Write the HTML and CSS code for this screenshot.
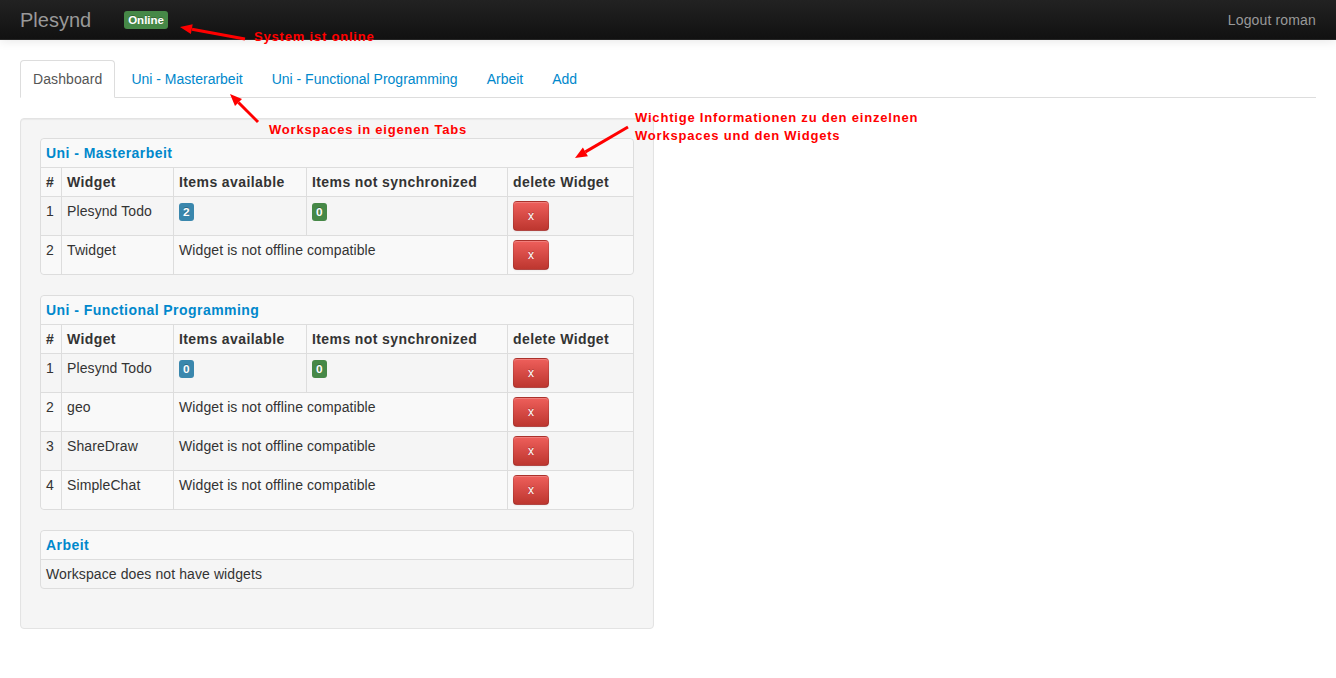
FILE: index.html
```html
<!DOCTYPE html>
<html lang="de">
<head>
<meta charset="utf-8">
<title>Plesynd</title>
<link rel="stylesheet" href="styles.css">
</head>
<body>
<header class="navbar">
  <a class="brand" href="#">Plesynd</a>
  <span class="label label-success">Online</span>
  <a class="logout" href="#">Logout roman</a>
</header>

<main class="container">
  <ul class="nav-tabs">
    <li class="active"><a href="#">Dashboard</a></li>
    <li><a href="#">Uni - Masterarbeit</a></li>
    <li><a href="#">Uni - Functional Programming</a></li>
    <li><a href="#">Arbeit</a></li>
    <li><a href="#">Add</a></li>
  </ul>

  <section class="well">
    <table class="ws-table">
      <colgroup><col class="c1"><col class="c2"><col class="c3"><col class="c4"><col class="c5"></colgroup>
      <thead>
        <tr class="cap"><th colspan="5">Uni - Masterarbeit</th></tr>
        <tr class="head"><th>#</th><th>Widget</th><th>Items available</th><th>Items not synchronized</th><th>delete Widget</th></tr>
      </thead>
      <tbody>
        <tr class="odd"><td>1</td><td>Plesynd Todo</td><td><span class="label label-info">2</span></td><td><span class="label label-success">0</span></td><td><button class="btn-danger">x</button></td></tr>
        <tr class="even"><td>2</td><td>Twidget</td><td colspan="2">Widget is not offline compatible</td><td><button class="btn-danger">x</button></td></tr>
      </tbody>
    </table>

    <table class="ws-table">
      <colgroup><col class="c1"><col class="c2"><col class="c3"><col class="c4"><col class="c5"></colgroup>
      <thead>
        <tr class="cap"><th colspan="5">Uni - Functional Programming</th></tr>
        <tr class="head"><th>#</th><th>Widget</th><th>Items available</th><th>Items not synchronized</th><th>delete Widget</th></tr>
      </thead>
      <tbody>
        <tr class="odd"><td>1</td><td>Plesynd Todo</td><td><span class="label label-info">0</span></td><td><span class="label label-success">0</span></td><td><button class="btn-danger">x</button></td></tr>
        <tr class="even"><td>2</td><td>geo</td><td colspan="2">Widget is not offline compatible</td><td><button class="btn-danger">x</button></td></tr>
        <tr class="odd"><td>3</td><td>ShareDraw</td><td colspan="2">Widget is not offline compatible</td><td><button class="btn-danger">x</button></td></tr>
        <tr class="even"><td>4</td><td>SimpleChat</td><td colspan="2">Widget is not offline compatible</td><td><button class="btn-danger">x</button></td></tr>
      </tbody>
    </table>

    <table class="ws-table">
      <thead>
        <tr class="cap"><th>Arbeit</th></tr>
      </thead>
      <tbody>
        <tr class="odd"><td>Workspace does not have widgets</td></tr>
      </tbody>
    </table>
  </section>
</main>

<div class="note note-online">System ist online</div>
<div class="note note-tabs">Workspaces in eigenen Tabs</div>
<div class="note note-info">Wichtige Informationen zu den einzelnen<br>Workspaces und den Widgets</div>

<svg class="arrows" width="1336" height="678" viewBox="0 0 1336 678" aria-hidden="true">
  <g stroke="#f00" stroke-width="3" fill="#f00">
    <line x1="245" y1="39" x2="192" y2="29.2"/>
    <polygon stroke="none" points="180,27 192.7,24.3 190.9,34.1"/>
    <line x1="258" y1="122" x2="238.5" y2="102.5"/>
    <polygon stroke="none" points="230,94 242,99 235,106"/>
    <line x1="628" y1="127" x2="585.4" y2="151.9"/>
    <polygon stroke="none" points="575,158 587.9,156.2 582.9,147.6"/>
  </g>
</svg>
</body>
</html>
```

FILE: styles.css
```css
* { box-sizing: border-box; }

html, body {
  margin: 0;
  padding: 0;
  background: #fff;
}

body {
  font-family: "Liberation Sans", Arial, Helvetica, sans-serif;
  font-size: 14px;
  line-height: 20px;
  color: #333;
  position: relative;
  width: 1336px;
  height: 678px;
  overflow: hidden;
}

a { text-decoration: none; }

/* Navbar */
.navbar {
  height: 40px;
  display: flex;
  align-items: center;
  padding: 0 20px;
  background: linear-gradient(to bottom, #222 0%, #111 100%);
  box-shadow: 0 1px 10px rgba(0, 0, 0, 0.1);
  border-bottom: 1px solid #252525;
}

.brand {
  font-size: 20px;
  line-height: 20px;
  color: #999;
  margin-right: 33px;
}

.logout {
  margin-left: auto;
  color: #999;
  letter-spacing: 0.15px;
}

.label {
  display: inline-block;
  padding: 2px 4px;
  font-size: 11.844px;
  font-weight: bold;
  line-height: 14px;
  color: #fff;
  border-radius: 3px;
  vertical-align: baseline;
  text-shadow: 0 -1px 0 rgba(0, 0, 0, 0.25);
  white-space: nowrap;
}

.label-success { background: #468847; }
.label-info { background: #3a87ad; }

.navbar .label {
  margin-top: 1px;
  font-size: 11.5px;
}

/* Content */
.container {
  padding: 20px 20px 0;
}

.nav-tabs {
  list-style: none;
  margin: 0 0 20px;
  padding: 0;
  display: flex;
  border-bottom: 1px solid #ddd;
}

.nav-tabs li {
  margin-bottom: -1px;
}

.nav-tabs a {
  display: block;
  padding: 8px 12px 8px 13px;
  margin-right: 2px;
  line-height: 20px;
  border: 1px solid transparent;
  border-radius: 4px 4px 0 0;
  color: #0088cc;
}

.nav-tabs .active a {
  color: #555;
  background: #fff;
  border-color: #ddd #ddd transparent;
  padding-left: 12px;
  letter-spacing: 0.1px;
}

.well {
  width: 634px;
  padding: 19px;
  background: #f5f5f5;
  border: 1px solid #e3e3e3;
  border-radius: 4px;
  box-shadow: inset 0 1px 1px rgba(0, 0, 0, 0.05);
}

.ws-table {
  width: 594px;
  table-layout: fixed;
  border-collapse: separate;
  border-spacing: 0;
  border: 1px solid #ddd;
  border-radius: 4px;
  margin-bottom: 20px;
}

.ws-table .c1 { width: 20px; }
.ws-table .c2 { width: 112px; }
.ws-table .c3 { width: 133px; }
.ws-table .c4 { width: 201px; }
.ws-table .c5 { width: 126px; }

.ws-table th,
.ws-table td {
  padding: 4px 5px;
  line-height: 20px;
  text-align: left;
  vertical-align: top;
  border-top: 1px solid #ddd;
  border-left: 1px solid #ddd;
  white-space: nowrap;
}

.ws-table td { letter-spacing: 0.1px; }

.ws-table th:first-child,
.ws-table td:first-child { border-left: 0; }

.ws-table tr.cap th {
  border-top: 0;
  color: #0088cc;
  font-weight: bold;
  letter-spacing: 0.45px;
  background: #f9f9f9;
  border-radius: 4px 4px 0 0;
}

.ws-table tr.head th {
  font-weight: bold;
  letter-spacing: 0.4px;
  background: #f9f9f9;
}

.ws-table tr.even td { background: #f9f9f9; }

.ws-table tbody tr:last-child td:first-child { border-bottom-left-radius: 4px; }
.ws-table tbody tr:last-child td:last-child { border-bottom-right-radius: 4px; }

.ws-table .label { letter-spacing: 0; }

.btn-danger {
  display: block;
  width: 36px;
  height: 30px;
  padding: 0;
  font-family: inherit;
  font-size: 12px;
  line-height: 28px;
  color: #fff;
  text-align: center;
  background: linear-gradient(to bottom, #ee5f5b 0%, #bd362f 100%);
  border: 1px solid #b33630;
  border-color: rgba(0, 0, 0, 0.1) rgba(0, 0, 0, 0.1) rgba(0, 0, 0, 0.25);
  border-radius: 4px;
  box-shadow: inset 0 1px 0 rgba(255, 255, 255, 0.2), 0 1px 2px rgba(0, 0, 0, 0.05);
  text-shadow: 0 -1px 0 rgba(0, 0, 0, 0.25);
  cursor: pointer;
}

/* Annotations overlay */
.note {
  position: absolute;
  color: #f00;
  font-family: "Liberation Sans", Arial, sans-serif;
  font-weight: bold;
  font-size: 13px;
  line-height: 18px;
  letter-spacing: 0.8px;
  white-space: nowrap;
}

.note-online { left: 254px; top: 28px; }
.note-tabs { left: 269px; top: 121px; }
.note-info { left: 635px; top: 109px; }

.arrows {
  position: absolute;
  left: 0;
  top: 0;
  pointer-events: none;
}
```
